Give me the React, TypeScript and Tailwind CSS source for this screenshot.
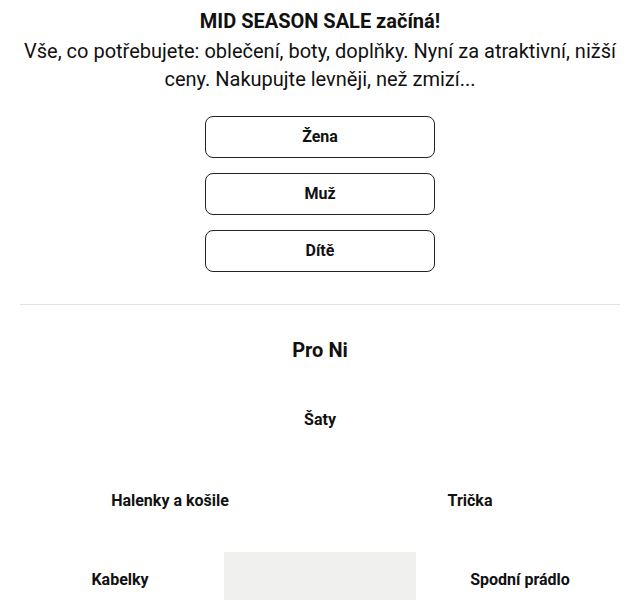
import React from "react";

export default function App() {
  return (
    <div className="w-[640px] h-[600px] overflow-hidden bg-white text-[#111] font-['Roboto',sans-serif]">
      <div className="px-5 pt-[7px] text-center text-[20px] leading-[28px]">
        <div className="font-bold">MID SEASON SALE začíná!</div>
        <div className="mt-[2px]">Vše, co potřebujete: oblečení, boty, doplňky. Nyní za atraktivní, nižší ceny. Nakupujte levněji, než zmizí...</div>
      </div>
      <div className="mt-[23px] flex flex-col items-center gap-[15px]">
        {["Žena", "Muž", "Dítě"].map((t) => (
          <button
            key={t}
            className="w-[230px] h-[42px] rounded-[8px] border border-[#222] bg-white text-[16px] font-bold flex items-center justify-center"
          >
            {t}
          </button>
        ))}
      </div>
      <div className="mx-5 mt-[32px] border-t border-[#e3e3e3]"></div>
      <div className="mx-5">
        <div className="h-[90px] flex items-center justify-center">
          <div className="text-[20px] font-bold">Pro Ni</div>
        </div>
        <div className="h-[50px] flex items-center justify-center">
          <div className="text-[16px] font-bold">Šaty</div>
        </div>
        <div className="grid grid-cols-2 h-[107px] items-center pt-[5px]">
          <div className="text-center text-[16px] font-bold">Halenky a košile</div>
          <div className="text-center text-[16px] font-bold">Trička</div>
        </div>
        <div className="flex h-[56px] gap-[4px]">
          <div className="w-[200px] flex items-center justify-center text-[16px] font-bold">Kabelky</div>
          <div className="w-[192px] bg-[#f0f0ee]"></div>
          <div className="w-[200px] flex items-center justify-center text-[16px] font-bold">Spodní prádlo</div>
        </div>
      </div>
    </div>
  );
}
